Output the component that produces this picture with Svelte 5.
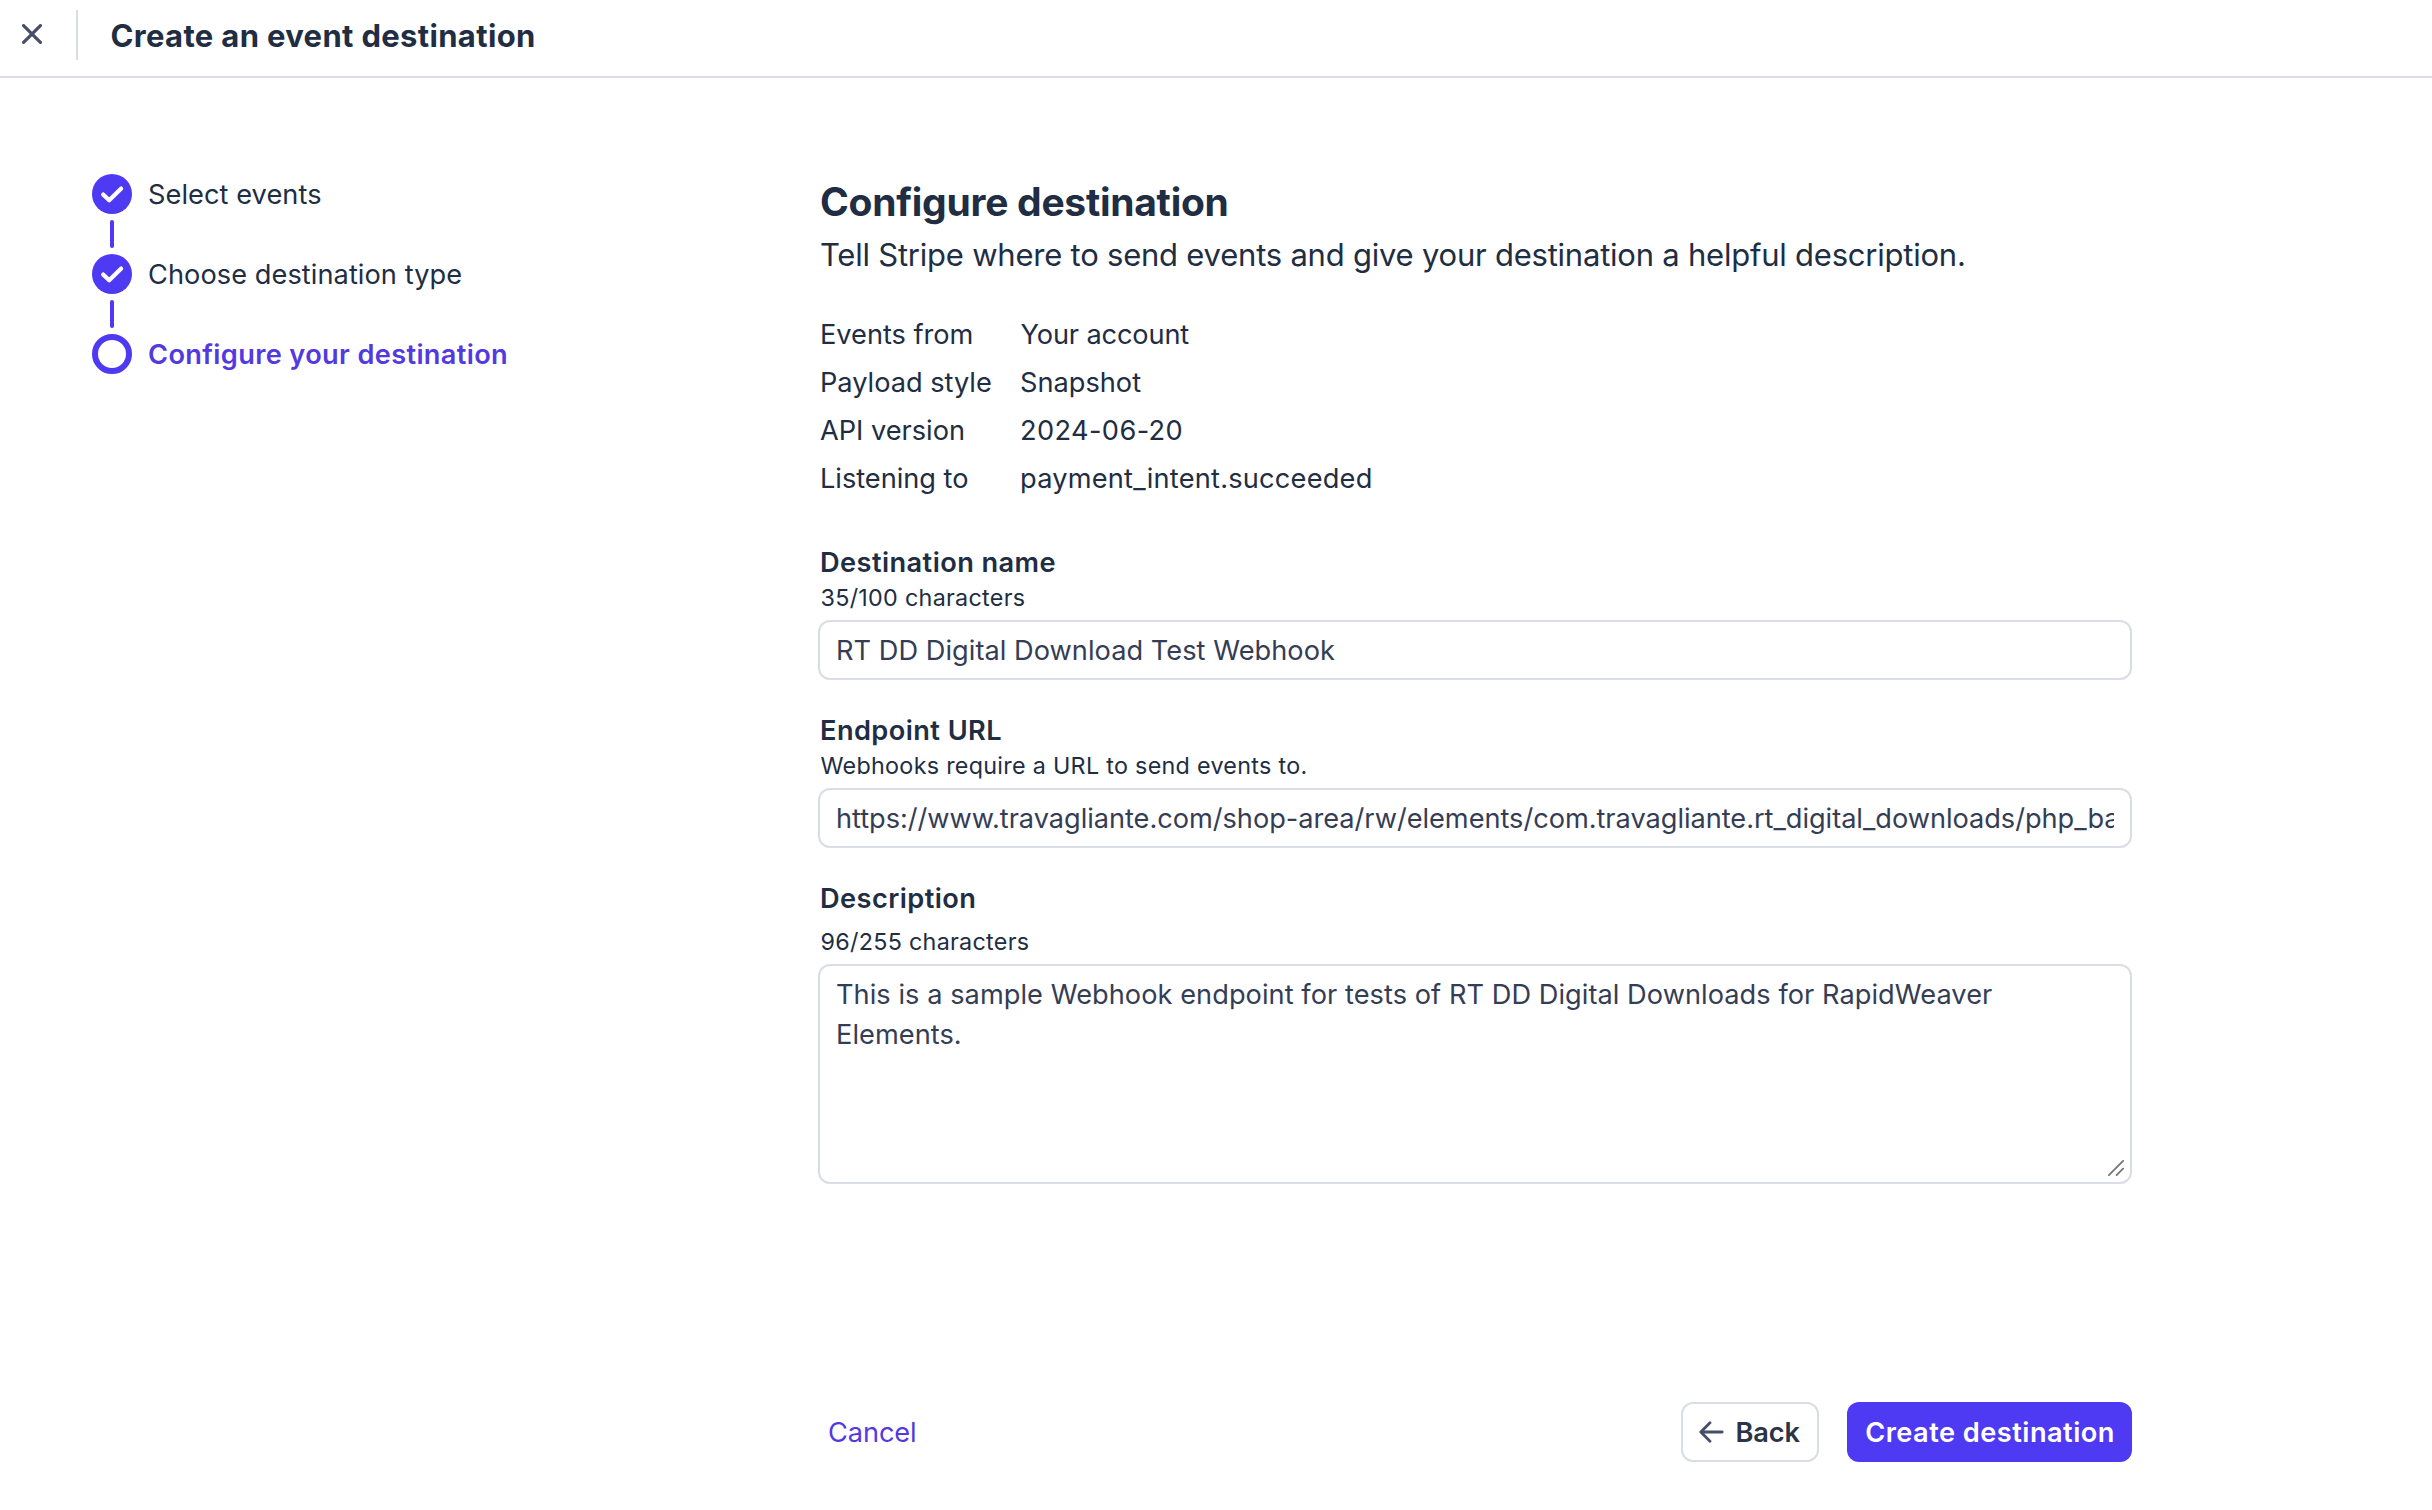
<script>
  const steps = [
    { label: 'Select events', done: true },
    { label: 'Choose destination type', done: true },
    { label: 'Configure your destination', done: false },
  ];

  const summary = [
    { term: 'Events from', value: 'Your account', fit: 'snug' },
    { term: 'Payload style', value: 'Snapshot', fit: 'plain' },
    { term: 'API version', value: '2024-06-20', fit: 'wide' },
    { term: 'Listening to', value: 'payment_intent.succeeded', fit: 'loose' },
  ];

  let name = $state('RT DD Digital Download Test Webhook');
  let url = $state(
    'https://www.travagliante.com/shop-area/rw/elements/com.travagliante.rt_digital_downloads/php_backend'
  );
  let description = $state(
    'This is a sample Webhook endpoint for tests of RT DD Digital Downloads for RapidWeaver Elements.'
  );
</script>

<div class="page">
  <header class="topbar">
    <button class="close" aria-label="Close">
      <svg width="20" height="20" viewBox="0 0 20 20">
        <path d="M1.6 1.6 18.4 18.4M18.4 1.6 1.6 18.4" />
      </svg>
    </button>
    <h1>Create an event destination</h1>
  </header>

  <main>
    <ol class="steps">
      {#each steps as step, i}
        <li class:current={!step.done}>
          <div class="marker">
            {#if step.done}
              <span class="dot">
                <svg width="40" height="40" viewBox="0 0 40 40">
                  <path d="M11.2 20.6 17.2 26.2 29.2 14.6" />
                </svg>
              </span>
            {:else}
              <span class="ring"></span>
            {/if}
            {#if i < steps.length - 1}
              <span class="link"></span>
            {/if}
          </div>
          <span class="step-label">{step.label}</span>
        </li>
      {/each}
    </ol>

    <section class="form">
      <h2>Configure destination</h2>
      <p class="lead">
        Tell Stripe where to send events and give your destination a helpful description.
      </p>

      <dl>
        {#each summary as row}
          <dt>{row.term}</dt>
          <dd class={row.fit}>{row.value}</dd>
        {/each}
      </dl>

      <div class="field">
        <label for="name">Destination name</label>
        <p class="hint">{name.length}/100 characters</p>
        <input id="name" class="input" bind:value={name} />
      </div>

      <div class="field">
        <label for="url">Endpoint URL</label>
        <p class="hint">Webhooks require a URL to send events to.</p>
        <input id="url" class="input" spellcheck="false" bind:value={url} />
      </div>

      <div class="field">
        <label for="description">Description</label>
        <p class="hint spaced">{description.length}/255 characters</p>
        <div class="area">
          <textarea id="description" class="input" spellcheck="false" bind:value={description}></textarea>
          <svg class="grip" width="16" height="16" viewBox="0 0 16 16">
            <path d="M0.9 15.1 15.1 0.9M8.6 15.1 15.1 8.6" />
          </svg>
        </div>
      </div>

      <footer>
        <button class="cancel">Cancel</button>
        <button class="back">
          <svg width="25" height="22" viewBox="0 0 25 22">
            <path d="M23.2 11H1.8M11 1.7 1.8 11 11 20.3" />
          </svg>
          <span>Back</span>
        </button>
        <button class="create">Create destination</button>
      </footer>
    </section>
  </main>
</div>

<style>
  :global(body) {
    background: #fff;
  }

  .page {
    min-height: 1510px;
    box-sizing: border-box;
    background: #fff;
    color: #212d42;
    font-family: Inter, 'Liberation Sans', sans-serif;
    font-size: 27.2px;
    overflow: hidden;
  }

  h1,
  h2,
  p,
  dl,
  dd,
  ol {
    margin: 0;
    padding: 0;
  }

  button {
    font: inherit;
    color: inherit;
    background: none;
    border: 0;
    padding: 0;
    margin: 0;
  }

  svg {
    display: block;
    fill: none;
    stroke-linecap: round;
    stroke-linejoin: round;
  }

  .topbar {
    box-sizing: border-box;
    height: 78px;
    padding: 10px 0 16px;
    border-bottom: 2px solid #d8dee4;
    display: flex;
    align-items: center;
  }

  .close {
    box-sizing: border-box;
    width: 78px;
    height: 50px;
    padding: 0 0 2px 22px;
    border-right: 2px solid #d8dee4;
    display: flex;
    align-items: center;
  }

  .close svg {
    stroke: #474e68;
    stroke-width: 3.2;
  }

  h1 {
    padding: 2px 0 0 32.5px;
    font-size: 31px;
    line-height: 50px;
    font-weight: 700;
    letter-spacing: 0.34px;
  }

  main {
    display: grid;
    grid-template-columns: 726px 1314px;
    padding: 96px 0 0 92px;
  }

  .steps {
    list-style: none;
  }

  .steps li {
    display: flex;
    gap: 16px;
    letter-spacing: 0.06px;
  }

  .step-label {
    line-height: 42px;
    height: 40px;
  }

  .steps .current {
    color: #533ae0;
    font-weight: 600;
    letter-spacing: 0.35px;
  }

  .marker {
    width: 40px;
    display: flex;
    flex-direction: column;
    align-items: center;
  }

  .dot {
    width: 40px;
    height: 40px;
    border-radius: 50%;
    background: #4f3af3;
  }

  .dot svg {
    stroke: #fff;
    stroke-width: 4.2;
  }

  .ring {
    box-sizing: border-box;
    width: 40px;
    height: 40px;
    border: 6px solid #4f3af3;
    border-radius: 50%;
  }

  .link {
    width: 4px;
    height: 28px;
    margin: 6px 0;
    border-radius: 2px;
    background: #4f3af3;
  }

  .form {
    padding-top: 4px;
  }

  h2 {
    padding-left: 2px;
    font-size: 39px;
    line-height: 48px;
    font-weight: 700;
    letter-spacing: -0.27px;
  }

  .lead {
    margin-top: 5px;
    padding-left: 2px;
    font-size: 31px;
    line-height: 48px;
    letter-spacing: -0.224px;
    white-space: nowrap;
  }

  dl {
    margin-top: 32px;
    display: grid;
    grid-template-columns: 200px 1fr;
    line-height: 48px;
  }

  dt {
    letter-spacing: -0.02px;
    padding-left: 2px;
  }

  dd {
    padding-left: 2px;
  }

  .snug {
    padding-left: 2.5px;
    letter-spacing: -0.14px;
  }

  .wide {
    letter-spacing: 0.38px;
  }

  .loose {
    letter-spacing: 0.22px;
  }

  .field {
    margin-top: 32px;
  }

  dl + .field {
    margin-top: 41px;
  }

  label {
    display: block;
    padding-left: 2px;
    line-height: 38px;
    font-weight: 600;
    letter-spacing: 0.43px;
  }

  .hint {
    margin-top: -1px;
    padding-left: 2.5px;
    font-size: 23.3px;
    line-height: 33px;
    letter-spacing: 0.3px;
  }

  .spaced {
    margin-top: 7px;
  }

  .input {
    display: block;
    box-sizing: border-box;
    width: 100%;
    height: 60px;
    margin: 6px 0 0;
    padding: 1px 16px 0;
    border: 2px solid #d8dee4;
    border-radius: 12px;
    outline: none;
    background: #fff;
    color: #353d55;
    font: inherit;
    letter-spacing: -0.035px;
  }

  #name {
    letter-spacing: 0.036px;
  }

  textarea.input {
    height: 220px;
    padding-top: 9px;
    line-height: 40px;
    letter-spacing: 0.048px;
    resize: none;
    overflow: hidden;
  }

  .area {
    position: relative;
  }

  .grip {
    position: absolute;
    right: 8.5px;
    bottom: 8.5px;
    stroke: #757575;
    stroke-width: 1.8;
  }

  footer {
    margin-top: 218px;
    display: flex;
    align-items: center;
    height: 60px;
  }

  .cancel {
    margin-right: auto;
    padding: 1px 0 0 10px;
    color: #533ae0;
    letter-spacing: -0.1px;
  }

  .back {
    box-sizing: border-box;
    width: 138px;
    height: 60px;
    margin-right: 28px;
    padding-left: 16px;
    border: 2px solid #d8dee4;
    border-radius: 12px;
    display: flex;
    align-items: center;
    gap: 11.5px;
    color: #2b3447;
    font-weight: 600;
    letter-spacing: -0.1px;
  }

  .back span {
    padding-top: 1px;
  }

  .back svg {
    stroke: #474e68;
    stroke-width: 2.8;
  }

  .create {
    width: 285px;
    height: 60px;
    padding: 1px 0 0 1px;
    border-radius: 12px;
    background: #4f3af3;
    color: #fff;
    font-weight: 600;
    letter-spacing: 0.47px;
  }
</style>
